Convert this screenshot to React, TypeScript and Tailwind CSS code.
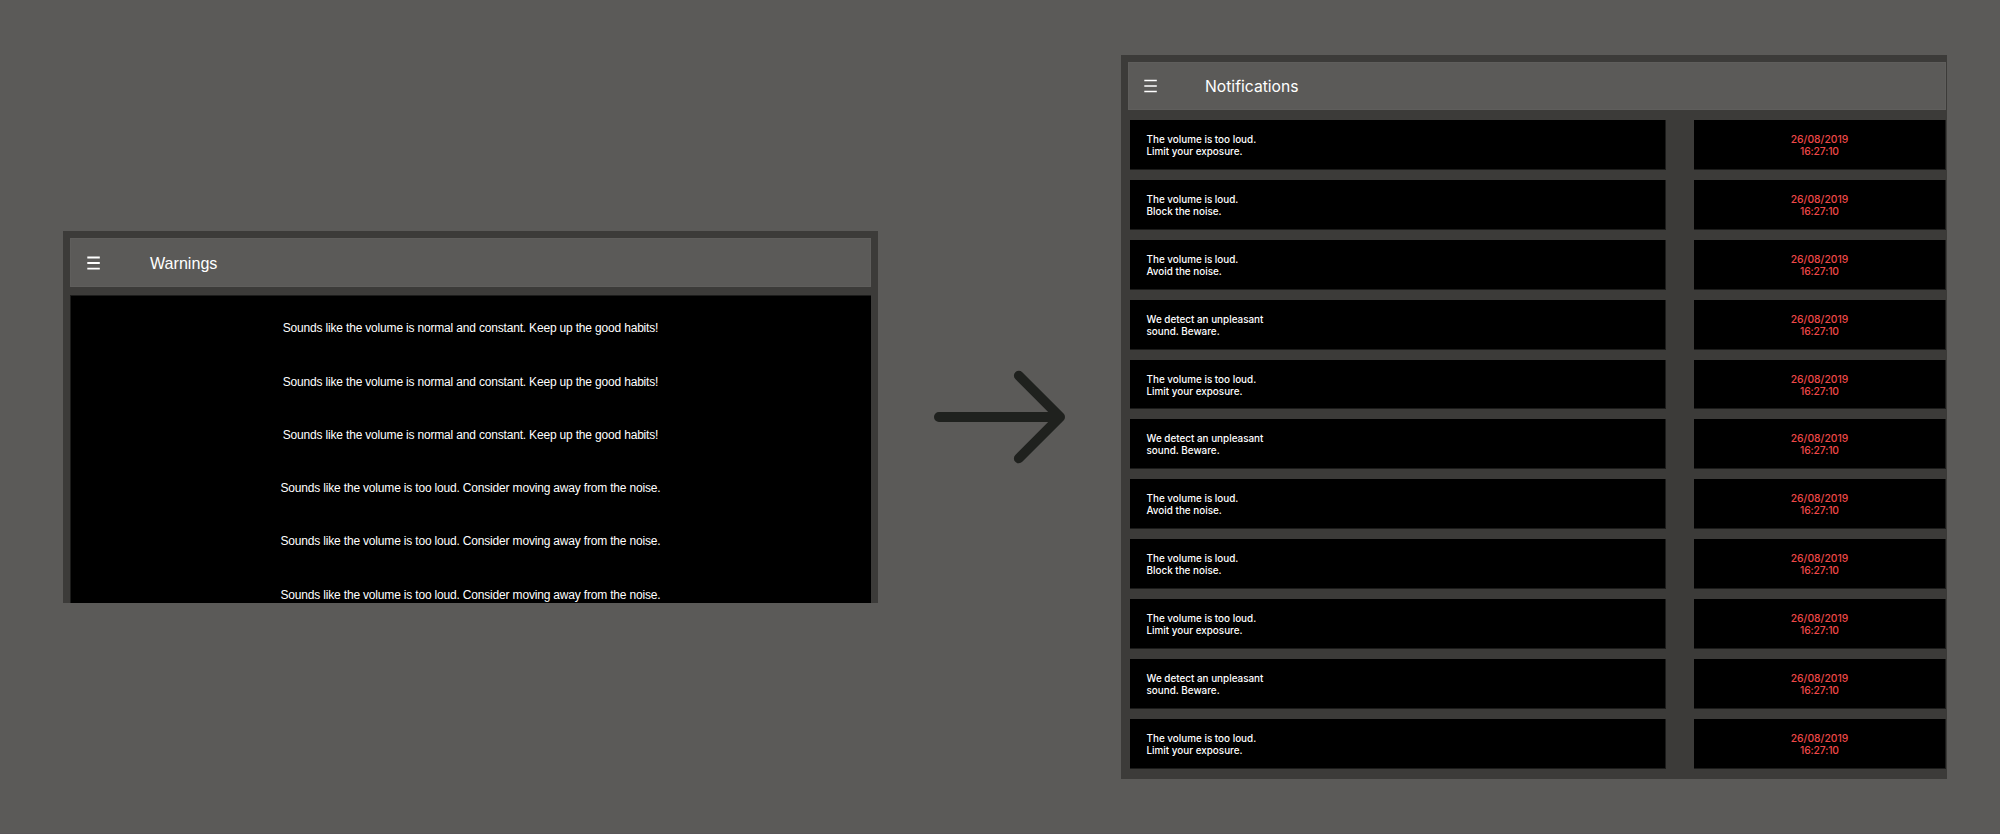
const NORMAL = 'Sounds like the volume is normal and constant. Keep up the good habits!'
const LOUD = 'Sounds like the volume is too loud. Consider moving away from the noise.'
const warnings = [NORMAL, NORMAL, NORMAL, LOUD, LOUD, LOUD]

const LIMIT = ['The volume is too loud.', 'Limit your exposure.']
const BLOCK = ['The volume is loud.', 'Block the noise.']
const AVOID = ['The volume is loud.', 'Avoid the noise.']
const DETECT = ['We detect an unpleasant', 'sound. Beware.']
const notifications = [LIMIT, BLOCK, AVOID, DETECT, LIMIT, DETECT, AVOID, BLOCK, LIMIT, DETECT, LIMIT]

function MenuIcon({ stroke }: { stroke: number }) {
  return (
    <svg className="h-[14px] w-[13px] shrink-0" viewBox="0 0 13 14" fill="none" stroke="#fff" strokeWidth={stroke}>
      <path d="M.3 1.5H12.8M.3 7H12.8M.3 12.6H12.8" />
    </svg>
  )
}

function WarningsPanel() {
  return (
    <section className="mt-[231px] flex h-[372px] w-[815px] shrink-0 flex-col overflow-hidden bg-[#3c3b39] px-[7px] pt-[7px] font-['Liberation_Sans',sans-serif] text-white">
      <header className="flex h-[49px] shrink-0 items-center border border-[#5f5e5c] bg-[#5b5a58] pl-[16px]">
        <MenuIcon stroke={1.9} />
        <h1 className="ml-[50px] text-[16.1px] leading-[20px]">Warnings</h1>
      </header>
      <ul className="mt-[8px] h-[308px] shrink-0 overflow-hidden border-t border-l border-[#1c1c1b] bg-black pt-[5.6px]">
        {warnings.map((text, i) => (
          <li
            key={i}
            className="flex h-[53.3px] items-center justify-center pr-px text-[12px] leading-[14px] tracking-[-0.18px]"
          >
            {text}
          </li>
        ))}
      </ul>
    </section>
  )
}

function NotificationsPanel() {
  return (
    <section className="mt-[55px] flex h-[724px] w-[826px] shrink-0 flex-col bg-[#3c3b39] pr-px pl-[7px] pt-[7px] font-[Inter,sans-serif] text-white">
      <header className="flex h-[48px] shrink-0 items-center border border-[#5f5e5c] bg-[#5b5a58] pl-[15px]">
        <MenuIcon stroke={1.5} />
        <h1 className="mt-[2px] ml-[48px] text-[15.7px] leading-[20px]">Notifications</h1>
      </header>
      <ul className="mt-[10px] flex flex-col gap-[10px] pl-[2px]">
        {notifications.map(([first, second], i) => (
          <li key={i} className="flex h-[49.9px] justify-between leading-[12px]">
            <div className="flex w-[536px] flex-col justify-center border-r border-b border-[#1c1c1b] bg-black pt-[1.2px] pl-[16.5px] text-[9.9px] font-medium">
              <p>{first}</p>
              <p>{second}</p>
            </div>
            <div className="flex w-[252px] flex-col items-center justify-center border-r border-b border-[#1c1c1b] bg-black pt-[1.2px] text-[10.35px] font-medium text-[#ee4848]">
              <p>26/08/2019</p>
              <p className="tracking-[-0.15px]">16:27:10</p>
            </div>
          </li>
        ))}
      </ul>
    </section>
  )
}

export default function App() {
  return (
    <main className="flex h-[834px] w-[2000px] items-start overflow-hidden border-b border-[#595658] bg-[#5b5a58] pl-[63px]">
      <WarningsPanel />
      <svg
        className="mt-[367px] ml-[52px] h-[100px] w-[140px] shrink-0"
        viewBox="930 367 140 100"
        fill="none"
        stroke="#1f211e"
        strokeWidth="9.8"
        strokeLinecap="round"
        strokeLinejoin="round"
      >
        <path d="M938.9 417H1060M1018.8 375.6L1060.1 417L1018.8 458.4" />
      </svg>
      <div className="ml-[51px]">
        <NotificationsPanel />
      </div>
    </main>
  )
}
